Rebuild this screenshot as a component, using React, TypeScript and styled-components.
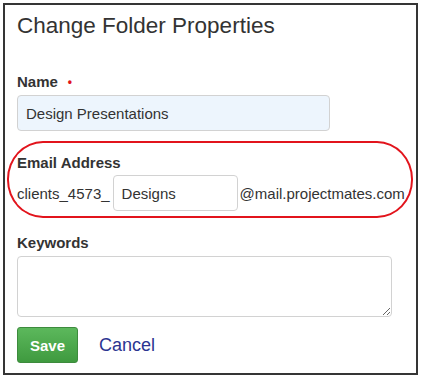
import React, { FC } from 'react';
import styled, { createGlobalStyle } from 'styled-components';

const GlobalStyle = createGlobalStyle`
    body {
        margin: 0;
        background: #fff;
        font-family: "Liberation Sans", Arial, sans-serif;
        color: #333;
    }
`;

const Frame = styled.div`
    margin: 3px;
    width: 415px;
    box-sizing: border-box;
    border: 2px solid #353535;
    padding: 8px 12px 10px 12px;
    background: #fff;
`;

const Title = styled.h1`
    margin: 0 0 33px 0;
    font-size: 22.5px;
    line-height: 26px;
    font-weight: normal;
    color: #333;
`;

const Label = styled.div`
    font-size: 15px;
    line-height: 20px;
    font-weight: bold;
    color: #333;
    margin-bottom: 3px;
`;

const Required = styled.span`
    color: #e2141c;
    font-size: 12px;
    margin-left: 10px;
    vertical-align: 1px;
`;

const TextInput = styled.input<{ $width: number; $tinted?: boolean }>`
    box-sizing: border-box;
    width: ${p => p.$width}px;
    height: 36px;
    padding: 0 8px;
    border: 1px solid #d2d2d2;
    border-radius: 4px;
    background: ${p => (p.$tinted ? '#edf5fd' : '#fff')};
    font-family: "Liberation Sans", Arial, sans-serif;
    font-size: 15px;
    color: #333;
    outline: none;
`;

const EmailGroup = styled.div`
    margin: 10px -9px 15px -10px;
    border: 2px solid #e2141c;
    border-radius: 36px / 38px;
    padding: 10px 8px 5px 8px;
`;

const EmailRow = styled.div`
    display: flex;
    align-items: center;
    gap: 3px;
    font-size: 15px;
    color: #333;
    white-space: nowrap;
`;

const Suffix = styled.span`
    margin-left: -1px;
`;

const KeywordsArea = styled.textarea`
    display: block;
    box-sizing: border-box;
    width: 375px;
    height: 61px;
    margin: 0;
    border: 1px solid #d2d2d2;
    border-radius: 4px;
    padding: 6px 8px;
    font-family: "Liberation Sans", Arial, sans-serif;
    font-size: 15px;
    outline: none;
`;

const Actions = styled.div`
    display: flex;
    align-items: center;
    gap: 21px;
    margin-top: 10px;
`;

const SaveButton = styled.button`
    width: 61px;
    height: 36px;
    border: 1px solid #3d8b3d;
    border-radius: 3px;
    background: linear-gradient(#5cb85c, #3f9a3f);
    color: #fff;
    font-family: "Liberation Sans", Arial, sans-serif;
    font-size: 15px;
    font-weight: bold;
    padding: 0;
`;

const CancelLink = styled.a`
    font-size: 18px;
    color: #2b3591;
    text-decoration: none;
`;

export default function App() {
    return (
        <>
            <GlobalStyle />
            <Frame>
                <Title>Change Folder Properties</Title>

                <Label>
                    Name<Required>•</Required>
                </Label>
                <TextInput $width={313} $tinted defaultValue="Design Presentations" />

                <EmailGroup>
                    <Label style={{ marginBottom: 2 }}>Email Address</Label>
                    <EmailRow>
                        <span>clients_4573_</span>
                        <TextInput $width={125} defaultValue="Designs" />
                        <Suffix>@mail.projectmates.com</Suffix>
                    </EmailRow>
                </EmailGroup>

                <Label>Keywords</Label>
                <KeywordsArea />

                <Actions>
                    <SaveButton>Save</SaveButton>
                    <CancelLink href="#">Cancel</CancelLink>
                </Actions>
            </Frame>
        </>
    );
}
